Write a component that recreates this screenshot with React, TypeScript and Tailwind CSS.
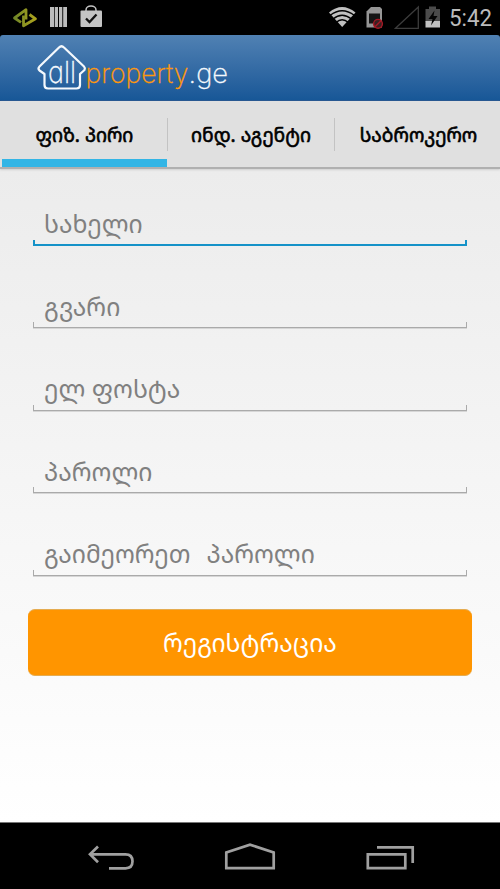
import React from "react";

const geo = "font-['Noto_Sans_Georgian','Noto_Sans','DejaVu_Sans',sans-serif]";

function StatusBar() {
  return (
    <header className="flex h-[35px] shrink-0 bg-black">
      <svg width="500" height="35" viewBox="0 0 500 35">
        <defs>
          <linearGradient id="leaf" gradientUnits="userSpaceOnUse" x1="13" x2="37" y1="0" y2="0">
            <stop offset="0" stopColor="#6c8428" />
            <stop offset="1" stopColor="#b0a51c" />
          </linearGradient>
        </defs>
        <g fill="none" stroke="url(#leaf)" strokeWidth="2.800" strokeLinejoin="round">
          <path d="M21 22.300L14.500 18L26 9.700V19.500" />
          <path d="M29.500 14.500L35.500 18.800L23.500 25.700V15.500" />
        </g>
        <path d="M50 7h4v20h-4zM54.700 7h3.300v20h-3.300zM59 7h3.300v20H59zM63.200 7H67v20h-3.800z" fill="#bcbcbc" />
        <path d="M86 14V10a5 4 0 0 1 10 0v4" fill="none" stroke="#c4c4c4" strokeWidth="1.500" />
        <rect x="80.500" y="10.500" width="21.500" height="16.500" rx="1" fill="#c4c4c4" />
        <path d="M86 18.500l3.500 3.500 7-7.500" fill="none" stroke="#111" strokeWidth="2.300" />
        <path d="M329 12.500Q342 1.500 355.500 12.500L342.200 27Z" fill="#c0c0c0" />
        <g fill="none" stroke="#000" strokeWidth="1.300">
          <path d="M330 15.500Q342 6 354.500 15.500" />
          <path d="M333 19Q342 11.500 351.500 19" />
          <path d="M336 22.500Q342 17 348.500 22.500" />
        </g>
        <path d="M371 7h9l2 2v18.500h-15.500V11.500z" fill="#969696" />
        <rect x="369" y="13.500" width="11" height="10" fill="#151515" />
        <circle cx="378" cy="23.800" r="4.400" fill="#3a2022" stroke="#a71824" strokeWidth="1.400" />
        <path d="M375 26.800l6-6" stroke="#a71824" strokeWidth="1.400" />
        <path d="M395.500 28.300L418.300 7v21.300z" fill="none" stroke="#3c3c3c" strokeWidth="1.300" />
        <path d="M429 6.500h7V9h4v13h-14.500V9h3.500z" fill="#4b4b4b" />
        <rect x="425.500" y="21" width="14.500" height="6.500" fill="#c1c1c1" />
        <path d="M434.500 10.500l-6 8.500h4l-1.500 6.500 6.500-9.500h-4z" fill="#050505" />
        <text x="449" y="26" textLength="43" lengthAdjust="spacingAndGlyphs" fill="#bcbcbc" fontSize="24" fontFamily="Roboto, sans-serif">5:42</text>
      </svg>
    </header>
  );
}

function Logo() {
  return (
    <svg width="210" height="66" viewBox="30 36 210 66" className="ml-[30px]">
      <path d="M44.500 75V86q0 3.500 3.500 3.500H76.500q3.500 0 3.500-3.500V75L84.500 71q1-2-.5-3.500L64 48.500Q61.500 46 59 48.500L39.500 67.500q-2 2 0 4z" fill="none" stroke="#f5f9fd" strokeWidth="2.200" strokeLinejoin="round" />
      <g className="font-extralight [font-feature-settings:'cv11']" fontFamily="Inter, sans-serif" fontSize="28">
        <text x="48" y="83.500" fontSize="30" textLength="28" lengthAdjust="spacingAndGlyphs" fill="#f5f9fd" stroke="#f5f9fd" strokeWidth="0.300">all</text>
        <text x="85.500" y="83.500" fontSize="27" textLength="103" lengthAdjust="spacingAndGlyphs" fill="#ff980c" stroke="#ff980c" strokeWidth="0.300">property</text>
        <text x="188.600" y="83.500" fontSize="27" textLength="39.400" lengthAdjust="spacingAndGlyphs" fill="#f5f9fd" stroke="#f5f9fd" strokeWidth="0.300">.ge</text>
      </g>
    </svg>
  );
}

function Tabs() {
  return (
    <nav className={"z-10 flex h-[68px] shrink-0 border-b-2 border-[#b0b0b0] bg-[#e0e0e0] text-[19.200px] text-black shadow-[0_1px_2px_#cfcfcf] [-webkit-text-stroke:0.600px_#000] " + geo}>
      <div className="ml-[2px] flex w-[165px] items-center justify-center border-b-8 border-[#33b5e5] pt-[10px]">
        <span className="whitespace-nowrap">ფიზ. პირი</span>
      </div>
      <div className="mt-[17px] h-[33px] w-px bg-[#c3c3c3]" />
      <div className="flex w-[166px] items-center justify-center pt-[2px]">
        <span className="whitespace-nowrap">ინდ. აგენტი</span>
      </div>
      <div className="mt-[17px] h-[33px] w-px bg-[#c3c3c3]" />
      <div className="flex flex-1 items-center justify-center pt-[2px] pl-[2px]">
        <span className="whitespace-nowrap">საბროკერო</span>
      </div>
    </nav>
  );
}

function Field({ label, active = false }: { label: string; active?: boolean }) {
  return (
    <div className="flex h-[82.600px] flex-col justify-end">
      <div className="mb-[1px] ml-[11px] flex h-[30px] items-center whitespace-pre text-[24.700px] text-[#808080]">{label}</div>
      <div
        className={
          active
            ? "h-[6px] border-x-2 border-b-2 border-[#1592c8]"
            : "h-[6px] border-x border-b border-[#aaa] shadow-[0_1px_0_#d6d6d6]"
        }
      />
    </div>
  );
}

function NavBar() {
  return (
    <footer className="h-[67px] shrink-0 border-t border-[#777] bg-black">
      <svg width="500" height="66" viewBox="0 823 500 66" fill="none" stroke="#a0a0a0" strokeWidth="2.700">
        <path d="M90 854.300H125.500q7 0 7 7t-7 7H109M98 846.500L90 854.300l8 8" />
        <path d="M226.300 868.200V852.500L250 844.700l23.700 7.800v15.700z" />
        <path d="M367.800 854.300h37.500v13.900h-37.500zM377 847.300h35.700V863" />
      </svg>
    </footer>
  );
}

export default function App() {
  return (
    <div className="flex h-[889px] w-[500px] flex-col overflow-hidden bg-black">
      <StatusBar />
      <div className="flex h-[66px] shrink-0 rounded-t-[3px] border-b border-[#1b4f8c] bg-linear-to-b from-[#5081b3] to-[#175797]">
        <Logo />
      </div>
      <Tabs />
      <main className={"flex-1 bg-linear-to-b from-[#ececec] to-white " + geo}>
        <div className="mx-[33px] -mt-[6px]">
          <Field label="სახელი" active />
          <Field label="გვარი" />
          <Field label="ელ ფოსტა" />
          <Field label="პაროლი" />
          <div className="[word-spacing:1.500px]">
            <Field label="გაიმეორეთ  პაროლი" />
          </div>
        </div>
        <button className="mx-[28px] mt-[33px] flex h-[67px] w-[444px] items-center justify-center rounded-[7px] border-y border-[#e5ac51] bg-[#ff9500] text-[24.700px] text-white">
          <span>რეგისტრაცია</span>
        </button>
      </main>
      <NavBar />
    </div>
  );
}
